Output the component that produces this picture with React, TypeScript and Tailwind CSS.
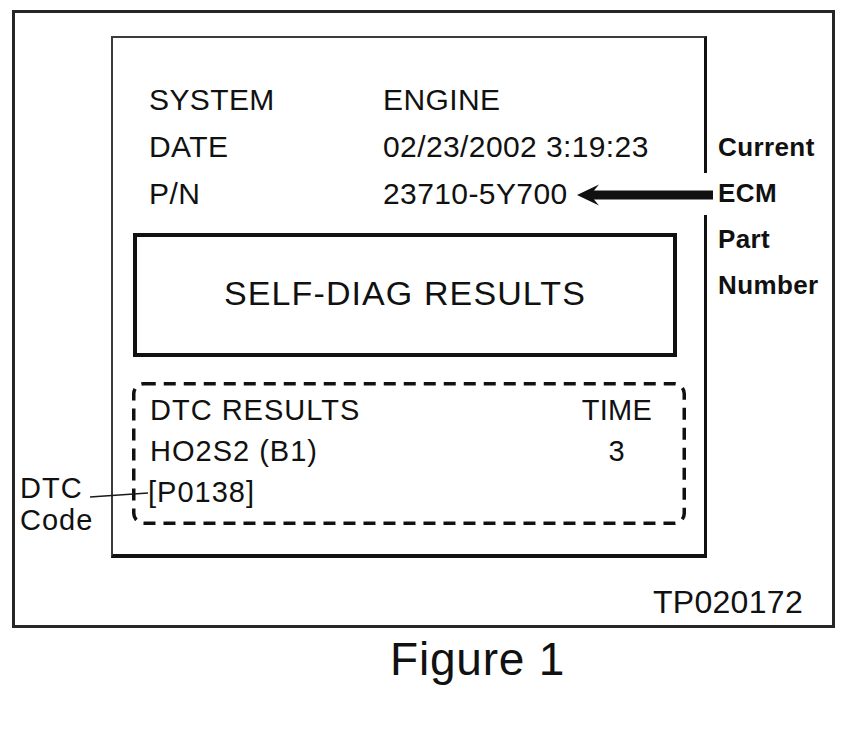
import React from "react";

const font = { fontFamily: '"Liberation Sans", Arial, sans-serif' };

export default function App() {
  return (
    <div
      className="relative w-[853px] h-[739px] bg-white text-[#111] overflow-hidden"
      style={font}
    >
      {/* Figure frame */}
      <div className="ml-[12px] mt-[10px] w-[823px] h-[618px] border-[3px] border-[#262626] flex flex-col">
        <div className="flex items-start">
          {/* Screen */}
          <div className="ml-[96px] mt-[23px] w-[596px] h-[522px] border-t-2 border-l-2 border-t-[#3c3c3c] border-l-[#3c3c3c] border-r-[3px] border-b-4 border-r-[#111] border-b-[#111] flex flex-col">
            <div className="ml-[36px] mt-[38px] grid grid-cols-[234px_auto] text-[30px] leading-[47px] tracking-[0.4px]">
              <div>SYSTEM</div>
              <div>ENGINE</div>
              <div>DATE</div>
              <div>02/23/2002 3:19:23</div>
              <div>P/N</div>
              <div>23710-5Y700</div>
            </div>

            <div className="ml-[20px] mt-[16px] w-[544px] h-[124px] border-4 border-[#111] flex justify-center pt-[39px]">
              <div className="text-[34px] leading-[34px] tracking-[1.1px]">SELF-DIAG RESULTS</div>
            </div>

            <div className="relative ml-[19px] mt-[25px] w-[554px] h-[143px] pt-[8px] pl-[18px] pr-[29px]">
              <svg
                className="absolute inset-0"
                width="554"
                height="143"
                viewBox="0 0 554 143"
              >
                <rect
                  x="1.75"
                  y="1.75"
                  width="550.5"
                  height="139.5"
                  rx="10"
                  ry="10"
                  fill="none"
                  stroke="#111"
                  strokeWidth="3.5"
                  strokeDasharray="12 8"
                />
              </svg>
              <div className="relative flex flex-col text-[29px] leading-[41px] tracking-[1px]">
                <div className="flex justify-between">
                  <span>DTC RESULTS</span>
                  <span className="w-[80px] text-center tracking-[0.3px]">TIME</span>
                </div>
                <div className="flex justify-between">
                  <span>HO2S2 (B1)</span>
                  <span className="w-[80px] text-center">3</span>
                </div>
                <div className="flex justify-between">
                  <span className="-ml-[2px]">[P0138]</span>
                </div>
              </div>
            </div>
          </div>

          {/* Right labels */}
          <div className="ml-[11px] mt-[111px] flex flex-col text-[26px] leading-[46px] font-bold tracking-[0.4px]">
            <div>Current</div>
            <div>ECM</div>
            <div>Part</div>
            <div>Number</div>
          </div>
        </div>

        <div className="mt-[28px] pr-[29px] flex justify-end">
          <div className="text-[32px] leading-[32px] tracking-[0.3px]">TP020172</div>
        </div>
      </div>

      <div className="ml-[390px] mt-[8px] text-[46px] leading-[46px] tracking-[0.8px]">Figure 1</div>

      {/* DTC Code callout */}
      <div className="absolute left-[20px] top-[472px] text-[29px] leading-[32px] tracking-[1px]">
        <div>DTC</div>
        <div>Code</div>
      </div>
      <svg className="absolute left-[88px] top-[488px]" width="62" height="14" viewBox="0 0 62 14">
        <line x1="2" y1="9" x2="60" y2="5" stroke="#1a1a1a" strokeWidth="1.6" />
      </svg>

      {/* Arrow to ECM part number */}
      <div className="absolute left-[701px] top-[173px] w-[9px] h-[42px] bg-white" />
      <svg className="absolute left-[577px] top-[184px]" width="137" height="22" viewBox="0 0 137 22">
        <path
          d="M0 11 L22 0.5 L17 6.5 L136 6.5 L136 15.5 L17 15.5 L22 21.5 Z"
          fill="#111"
        />
      </svg>
    </div>
  );
}
